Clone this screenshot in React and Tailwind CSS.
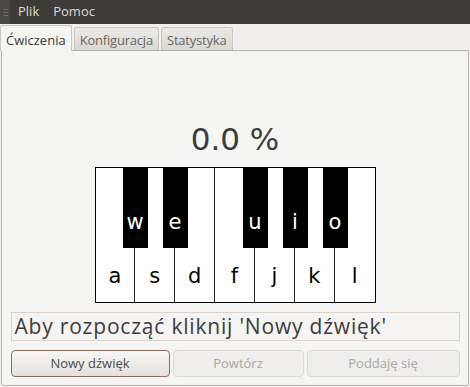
import React from 'react';

const whiteKeys = ['a', 's', 'd', 'f', 'j', 'k', 'l'];
// black key letters with their left offset inside the keyboard
const blackKeys = [
  { label: 'w', left: 27 },
  { label: 'e', left: 67 },
  { label: 'u', left: 147 },
  { label: 'i', left: 187 },
  { label: 'o', left: 227 },
];

function Tab({ label, active }) {
  if (active) {
    return (
      <div className="h-[26px] px-[5px] pt-[5px] bg-[#f5f5f3] border border-b-0 border-[#c9c7c2] rounded-t-[3px] text-[13px] text-[#3c3c3c] relative z-10 -mb-px">
        {label}
      </div>
    );
  }
  return (
    <div className="h-[23px] px-[5px] pt-[3px] bg-gradient-to-b from-[#ebeae7] to-[#d9d8d5] border border-b-0 border-[#c9c7c2] rounded-t-[3px] text-[13px] text-[#6a6661] tracking-[-0.2px]">
      {label}
    </div>
  );
}

function Piano() {
  return (
    <div className="relative w-[281px] h-[136px] border border-black bg-white flex" style={{ fontFamily: '"DejaVu Sans", sans-serif' }}>
      {whiteKeys.map((k, i) => (
        <div
          key={k}
          className={`w-[40px] h-full flex items-end justify-center pb-[15px] text-[21px] leading-none text-black ${i < 6 ? 'border-r border-[#222]' : ''}`}
        >
          {k}
        </div>
      ))}
      {blackKeys.map(b => (
        <div
          key={b.label}
          className="absolute top-0 w-[25px] h-[80px] bg-black flex items-end justify-center pb-[15px] text-[21px] leading-none text-white"
          style={{ left: b.left }}
        >
          {b.label}
        </div>
      ))}
    </div>
  );
}

export default function App() {
  return (
    <div className="w-[470px] h-[387px] bg-[#f0efed] overflow-hidden flex flex-col" style={{ fontFamily: '"Open Sans", "DejaVu Sans", sans-serif' }}>
      {/* menu bar */}
      <div className="h-[24px] bg-[#3c3b37] flex items-center text-[13px] text-[#dfdbd2]">
        <div className="w-[10px] h-full bg-[#4a4844] flex flex-col justify-center items-center gap-[2px]">
          <div className="w-[5px] h-px bg-[#6d6a64]" />
          <div className="w-[5px] h-px bg-[#6d6a64]" />
          <div className="w-[5px] h-px bg-[#6d6a64]" />
        </div>
        <span className="ml-[8px]">Plik</span>
        <span className="ml-[14px]">Pomoc</span>
      </div>

      {/* tabs */}
      <div className="h-[26px] flex items-end gap-[2px] pt-px">
        <Tab label="Ćwiczenia" active />
        <Tab label="Konfiguracja" />
        <Tab label="Statystyka" />
      </div>

      {/* panel */}
      <div className="flex-1 mx-px mb-px bg-[#f5f5f3] border border-[#b3b1ad] rounded-b-[3px] flex flex-col items-center">
        <div className="mt-[70px] h-[36px] text-[31px] leading-[36px] text-[#3c3c3c]" style={{ fontFamily: '"DejaVu Sans", sans-serif' }}>
          0.0 %
        </div>
        <div className="mt-[10px]">
          <Piano />
        </div>
        <div className="mt-[9px] w-[449px] h-[29px] border border-[#dcd3c9] bg-[#f5f4f2] px-[3px] flex items-center text-[21px] tracking-[0.8px] text-[#3c3c3c] leading-none">
          Aby rozpocząć kliknij 'Nowy dźwięk'
        </div>
        <div className="mt-[9px] w-[449px] flex gap-[3px]">
          <button className="w-[159px] h-[27px] rounded-[4px] border border-[#8b6f60] bg-gradient-to-b from-[#f7f6f4] to-[#e4e2de] text-[13px] text-[#4c4c4c]">
            Nowy dźwięk
          </button>
          <button className="w-[131px] h-[27px] rounded-[4px] border border-[#dcdad6] bg-[#efeeec] text-[13px] text-[#aaa8a4]">
            Powtórz
          </button>
          <button className="flex-1 h-[27px] rounded-[4px] border border-[#dcdad6] bg-[#efeeec] text-[13px] text-[#aaa8a4]">
            Poddaję się
          </button>
        </div>
      </div>
    </div>
  );
}
